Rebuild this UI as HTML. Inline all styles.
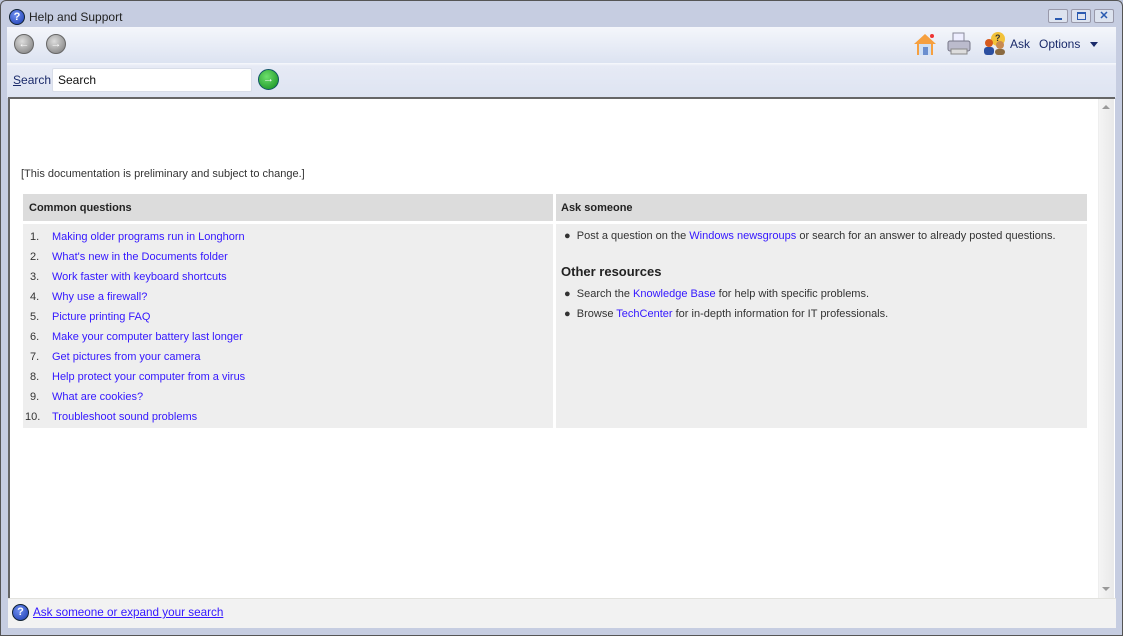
<!DOCTYPE html>
<html><head><style>
*{margin:0;padding:0;box-sizing:border-box}
body{width:1123px;height:636px;overflow:hidden;background:#bcc4d9;font-family:"Liberation Sans",sans-serif;font-size:11px;color:#333;position:relative}
.abs{position:absolute}
a{color:#3316ff;text-decoration:none}
.circ{border-radius:50%;position:absolute}
</style></head><body>
<div class="abs" style="left:0;top:0;width:1123px;height:636px;border:1px solid #555;border-radius:6px 6px 0 0;background:#c6cde1"></div>
<!-- title -->
<div class="circ" style="left:9px;top:9px;width:16px;height:16px;background:radial-gradient(circle at 40% 35%,#6f8ff0,#1a3bb0);border:1px solid #123;color:#fff;font-weight:bold;font-size:11px;text-align:center;line-height:14px">?</div>
<div class="abs" style="left:29px;top:10px;font-size:12px;color:#222">Help and Support</div>
<div class="abs" style="left:1048px;top:9px;width:20px;height:14px;border:1px solid #99a;border-radius:2px;background:#dde3ef"><div class="abs" style="left:6px;top:8px;width:7px;height:2px;background:#2a5ab0"></div></div>
<div class="abs" style="left:1071px;top:9px;width:20px;height:14px;border:1px solid #99a;border-radius:2px;background:#dde3ef"><div class="abs" style="left:5px;top:2px;width:9px;height:8px;border:1px solid #2a5ab0;border-top-width:2px"></div></div>
<div class="abs" style="left:1094px;top:9px;width:20px;height:14px;border:1px solid #99a;border-radius:2px;background:#dde3ef;color:#2a5ab0;font-size:11px;font-weight:bold;text-align:center;line-height:12px">✕</div>
<!-- toolbar -->
<div class="abs" style="left:7px;top:27px;width:1109px;height:36px;background:linear-gradient(#f4f6fb,#dce3f1)"></div>
<div class="circ" style="left:14px;top:34px;width:20px;height:20px;background:radial-gradient(circle at 40% 35%,#ddd,#777);border:1px solid #666;color:#fff;text-align:center;line-height:18px;font-weight:bold">←</div>
<div class="circ" style="left:46px;top:34px;width:20px;height:20px;background:radial-gradient(circle at 40% 35%,#ddd,#777);border:1px solid #666;color:#fff;text-align:center;line-height:18px;font-weight:bold">→</div>
<svg class="abs" style="left:912px;top:31px" width="26" height="26"><polygon points="13,3 24,13 21,13 21,24 5,24 5,13 2,13" fill="#f6a040"/><rect x="7" y="13" width="12" height="11" fill="#cfe0f5"/><rect x="11" y="16" width="5" height="8" fill="#6b8fcf"/><circle cx="20" cy="5" r="2" fill="#e33"/></svg>
<svg class="abs" style="left:946px;top:31px" width="26" height="26"><rect x="7" y="2" width="11" height="9" fill="#eef" stroke="#889"/><rect x="2" y="10" width="22" height="10" rx="2" fill="#bbc" stroke="#778"/><rect x="5" y="18" width="16" height="5" fill="#ddd" stroke="#888"/></svg>
<svg class="abs" style="left:981px;top:31px" width="26" height="26"><circle cx="17" cy="8" r="7" fill="#f2c23a"/><circle cx="8" cy="12" r="4" fill="#d65a1c"/><rect x="3" y="16" width="10" height="8" rx="3" fill="#2c4fa0"/><circle cx="19" cy="14" r="4" fill="#c88a50"/><rect x="14" y="18" width="10" height="6" rx="3" fill="#8a6a40"/><text x="14" y="10" font-size="9" font-weight="bold" fill="#333">?</text></svg>
<div class="abs" style="left:1010px;top:37px;font-size:12px;color:#1a2a6a">Ask</div>
<div class="abs" style="left:1039px;top:37px;font-size:12px;color:#1a2a6a">Options</div>
<div class="abs" style="left:1090px;top:42px;width:0;height:0;border-left:4px solid transparent;border-right:4px solid transparent;border-top:5px solid #1a2a6a"></div>
<!-- search bar -->
<div class="abs" style="left:7px;top:63px;width:1109px;height:35px;background:linear-gradient(#f7f9fc 0,#e6eaf5 3px,#dee4f2)"></div>
<div class="abs" style="left:13px;top:73px;font-size:12px;color:#1a2a6a"><u>S</u>earch</div>
<div class="abs" style="left:52px;top:68px;width:200px;height:24px;background:#fff;border:1px solid #d8dde8;border-radius:2px;font-size:12px;color:#111;padding:4px 5px">Search</div>
<div class="circ" style="left:258px;top:69px;width:21px;height:21px;background:radial-gradient(circle at 40% 35%,#6de06d,#118a1c);border:1px solid #156;color:#fff;text-align:center;line-height:19px;font-weight:bold">→</div>
<!-- content -->
<div class="abs" style="left:8px;top:97px;width:1107px;height:501px;background:#fff;border-top:2px solid #666;border-left:2px solid #666"></div>
<div class="abs" style="left:1098px;top:99px;width:16px;height:499px;background:linear-gradient(90deg,#f4f4f4,#e9e9e9);border-left:1px solid #eee"></div>
<div class="abs" style="left:1102px;top:105px;border-left:4px solid transparent;border-right:4px solid transparent;border-bottom:4px solid #999"></div>
<div class="abs" style="left:1102px;top:587px;border-left:4px solid transparent;border-right:4px solid transparent;border-top:4px solid #999"></div>
<div class="abs" style="left:21px;top:168px;color:#333">[This documentation is preliminary and subject to change.]</div>
<div class="abs" style="left:23px;top:194px;width:530px;height:27px;background:#dcdcdc;font-weight:bold;padding:8px 6px;color:#222">Common questions</div>
<div class="abs" style="left:556px;top:194px;width:531px;height:27px;background:#dcdcdc;font-weight:bold;padding:8px 5px;color:#222">Ask someone</div>
<div class="abs" style="left:23px;top:224px;width:530px;height:204px;background:#eeeeee"></div>
<div class="abs" style="left:556px;top:224px;width:531px;height:204px;background:#eeeeee"></div>
<div class="abs" style="left:25px;top:227px;line-height:20px">
<div><span style="display:inline-block;width:27px;text-align:left;padding-left:5px">1.</span><a>Making older programs run in Longhorn</a></div>
<div><span style="display:inline-block;width:27px;padding-left:5px">2.</span><a>What's new in the Documents folder</a></div>
<div><span style="display:inline-block;width:27px;padding-left:5px">3.</span><a>Work faster with keyboard shortcuts</a></div>
<div><span style="display:inline-block;width:27px;padding-left:5px">4.</span><a>Why use a firewall?</a></div>
<div><span style="display:inline-block;width:27px;padding-left:5px">5.</span><a>Picture printing FAQ</a></div>
<div><span style="display:inline-block;width:27px;padding-left:5px">6.</span><a>Make your computer battery last longer</a></div>
<div><span style="display:inline-block;width:27px;padding-left:5px">7.</span><a>Get pictures from your camera</a></div>
<div><span style="display:inline-block;width:27px;padding-left:5px">8.</span><a>Help protect your computer from a virus</a></div>
<div><span style="display:inline-block;width:27px;padding-left:5px">9.</span><a>What are cookies?</a></div>
<div><span style="display:inline-block;width:27px">10.</span><a>Troubleshoot sound problems</a></div>
</div>
<div class="abs" style="left:564px;top:230px;line-height:12px">● &nbsp;Post a question on the <a>Windows newsgroups</a> or search for an answer to already posted questions.</div>
<div class="abs" style="left:561px;top:264px;font-size:13px;font-weight:bold;color:#222">Other resources</div>
<div class="abs" style="left:564px;top:288px">● &nbsp;Search the <a>Knowledge Base</a> for help with specific problems.</div>
<div class="abs" style="left:564px;top:308px">● &nbsp;Browse <a>TechCenter</a> for in-depth information for IT professionals.</div>
<!-- status -->
<div class="abs" style="left:8px;top:598px;width:1108px;height:30px;background:#f2f2f2;border-top:1px solid #e2e2de"></div>
<div class="circ" style="left:12px;top:604px;width:17px;height:17px;background:radial-gradient(circle at 40% 35%,#6f8ff0,#1a3bb0);border:1px solid #123;color:#fff;font-weight:bold;font-size:11px;text-align:center;line-height:15px">?</div>
<div class="abs" style="left:33px;top:606px;font-size:11.7px"><a style="text-decoration:underline">Ask someone or expand your search</a></div>
</body></html>
